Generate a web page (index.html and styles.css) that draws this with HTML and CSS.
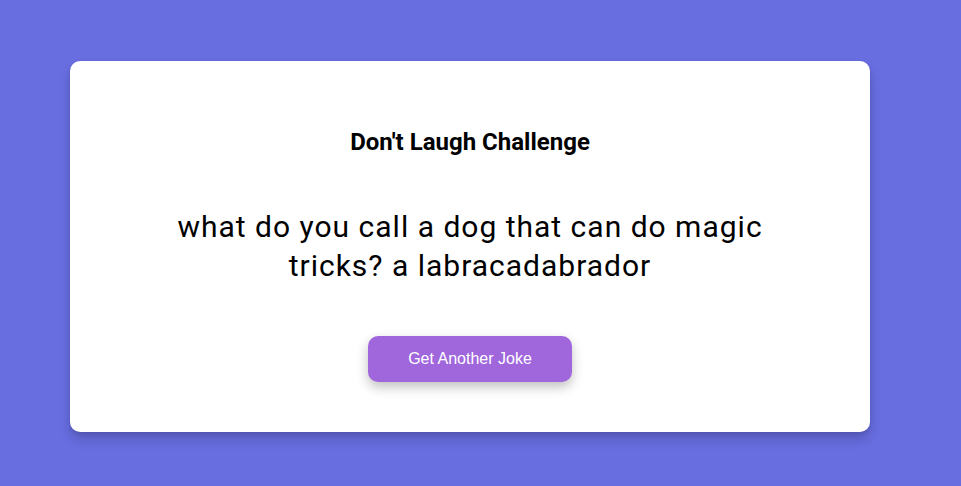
FILE: index.html
```html
<!DOCTYPE html>
<html lang="en">
<head>
<meta charset="UTF-8">
<title>Don't Laugh Challenge</title>
<link rel="stylesheet" href="styles.css">
</head>
<body>
<main class="page">
  <section class="card">
    <h3 class="title">Don't Laugh Challenge</h3>
    <p class="joke">what do you call a dog that can do magic tricks? a labracadabrador</p>
    <button class="btn" type="button">Get Another Joke</button>
  </section>
</main>
</body>
</html>
```
FILE: styles.css
```css
* { box-sizing: border-box; }
html, body { margin: 0; padding: 0; }
body {
  background: #686de0;
  font-family: Roboto, "Liberation Sans", sans-serif;
  height: 486px;
  overflow: hidden;
}
.page {
  padding: 61px 0 0 70px;
}
.card {
  width: 800px;
  height: 371px;
  background: #ffffff;
  border-radius: 10px;
  box-shadow: 0 8px 12px rgba(0, 0, 0, 0.15), 0 2px 4px rgba(0, 0, 0, 0.1);
  display: flex;
  flex-direction: column;
  align-items: center;
  padding: 67px 20px 50px;
  text-align: center;
}
.title {
  margin: 0;
  font-size: 24px;
  line-height: 28px;
  font-weight: 700;
  color: #000;
}
.joke {
  margin: 51px 0 0;
  max-width: 640px;
  font-size: 30px;
  line-height: 39px;
  letter-spacing: 1px;
  color: #000;
}
.btn {
  margin-top: 51px;
  width: 204px;
  height: 46px;
  border: none;
  border-radius: 10px;
  background: #a066dc;
  color: #fff;
  font-family: "Liberation Sans", Arial, sans-serif;
  font-size: 16px;
  box-shadow: 0 5px 12px rgba(0, 0, 0, 0.25);
}
```
